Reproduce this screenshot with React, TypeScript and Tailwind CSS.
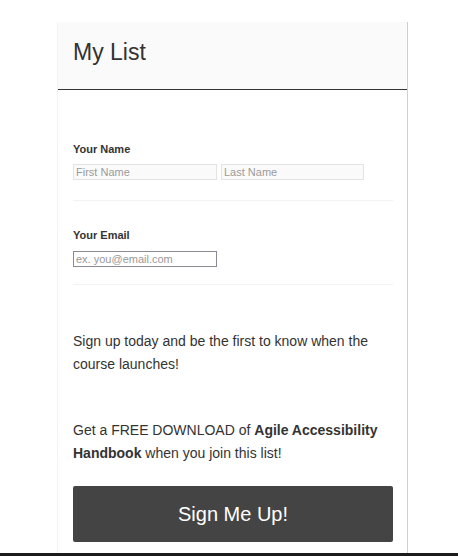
import React from "react";

const font = { fontFamily: '"Liberation Sans", Arial, sans-serif' };

export default function App() {
  return (
    <div className="flex h-[556px] flex-col bg-white text-[#333]" style={font}>
      <div className="ml-[57px] mt-[22px] flex w-[351px] flex-1 flex-col overflow-hidden border-r border-l border-r-[#cfcfcf] border-l-[#f3f3f3]">
        <div className="h-[68px] border-b border-[#333] bg-[#fafafa] pl-[15px] pt-[17px]">
          <h1 className="text-[23px] leading-[26px] text-[#333]">My List</h1>
        </div>

        <div className="pl-[15px] pr-[14px]">
          <div className="border-b border-[#f2f2f2] pt-[53px] pb-[20px]">
            <label className="block text-[11px] font-bold leading-[13px]">Your Name</label>
            <div className="mt-[8px] flex gap-[4px]">
              <input
                placeholder="First Name"
                className="h-[16px] w-[144px] border border-[#e3e3e3] bg-[#fafafa] px-[2px] text-[11px] leading-[14px] placeholder:text-[#9a9a9a] outline-none"
              />
              <input
                placeholder="Last Name"
                className="h-[16px] w-[143px] border border-[#e3e3e3] bg-[#fafafa] px-[2px] text-[11px] leading-[14px] placeholder:text-[#9a9a9a] outline-none"
              />
            </div>
          </div>

          <div className="border-b border-[#f2f2f2] pt-[28px] pb-[17px]">
            <label className="block text-[11px] font-bold leading-[13px]">Your Email</label>
            <input
              placeholder="ex. you@email.com"
              className="mt-[9px] block h-[16px] w-[144px] border border-[#8a8a95] bg-white px-[2px] text-[11px] leading-[14px] placeholder:text-[#999] outline-none"
            />
          </div>

          <p className="mt-[45px] text-[14px] leading-[23px]">
            Sign up today and be the first to know when the course launches!
          </p>

          <p className="mt-[43px] text-[14px] leading-[23px]">
            Get a FREE DOWNLOAD of <b>Agile Accessibility Handbook</b> when you join this list!
          </p>

          <button className="mt-[21px] flex h-[56px] w-full items-center justify-center rounded-[2px] bg-[#444] text-[20px] text-white">
            Sign Me Up!
          </button>
        </div>
      </div>
      <div className="h-[3px] bg-[#1c1c1c]"></div>
    </div>
  );
}
